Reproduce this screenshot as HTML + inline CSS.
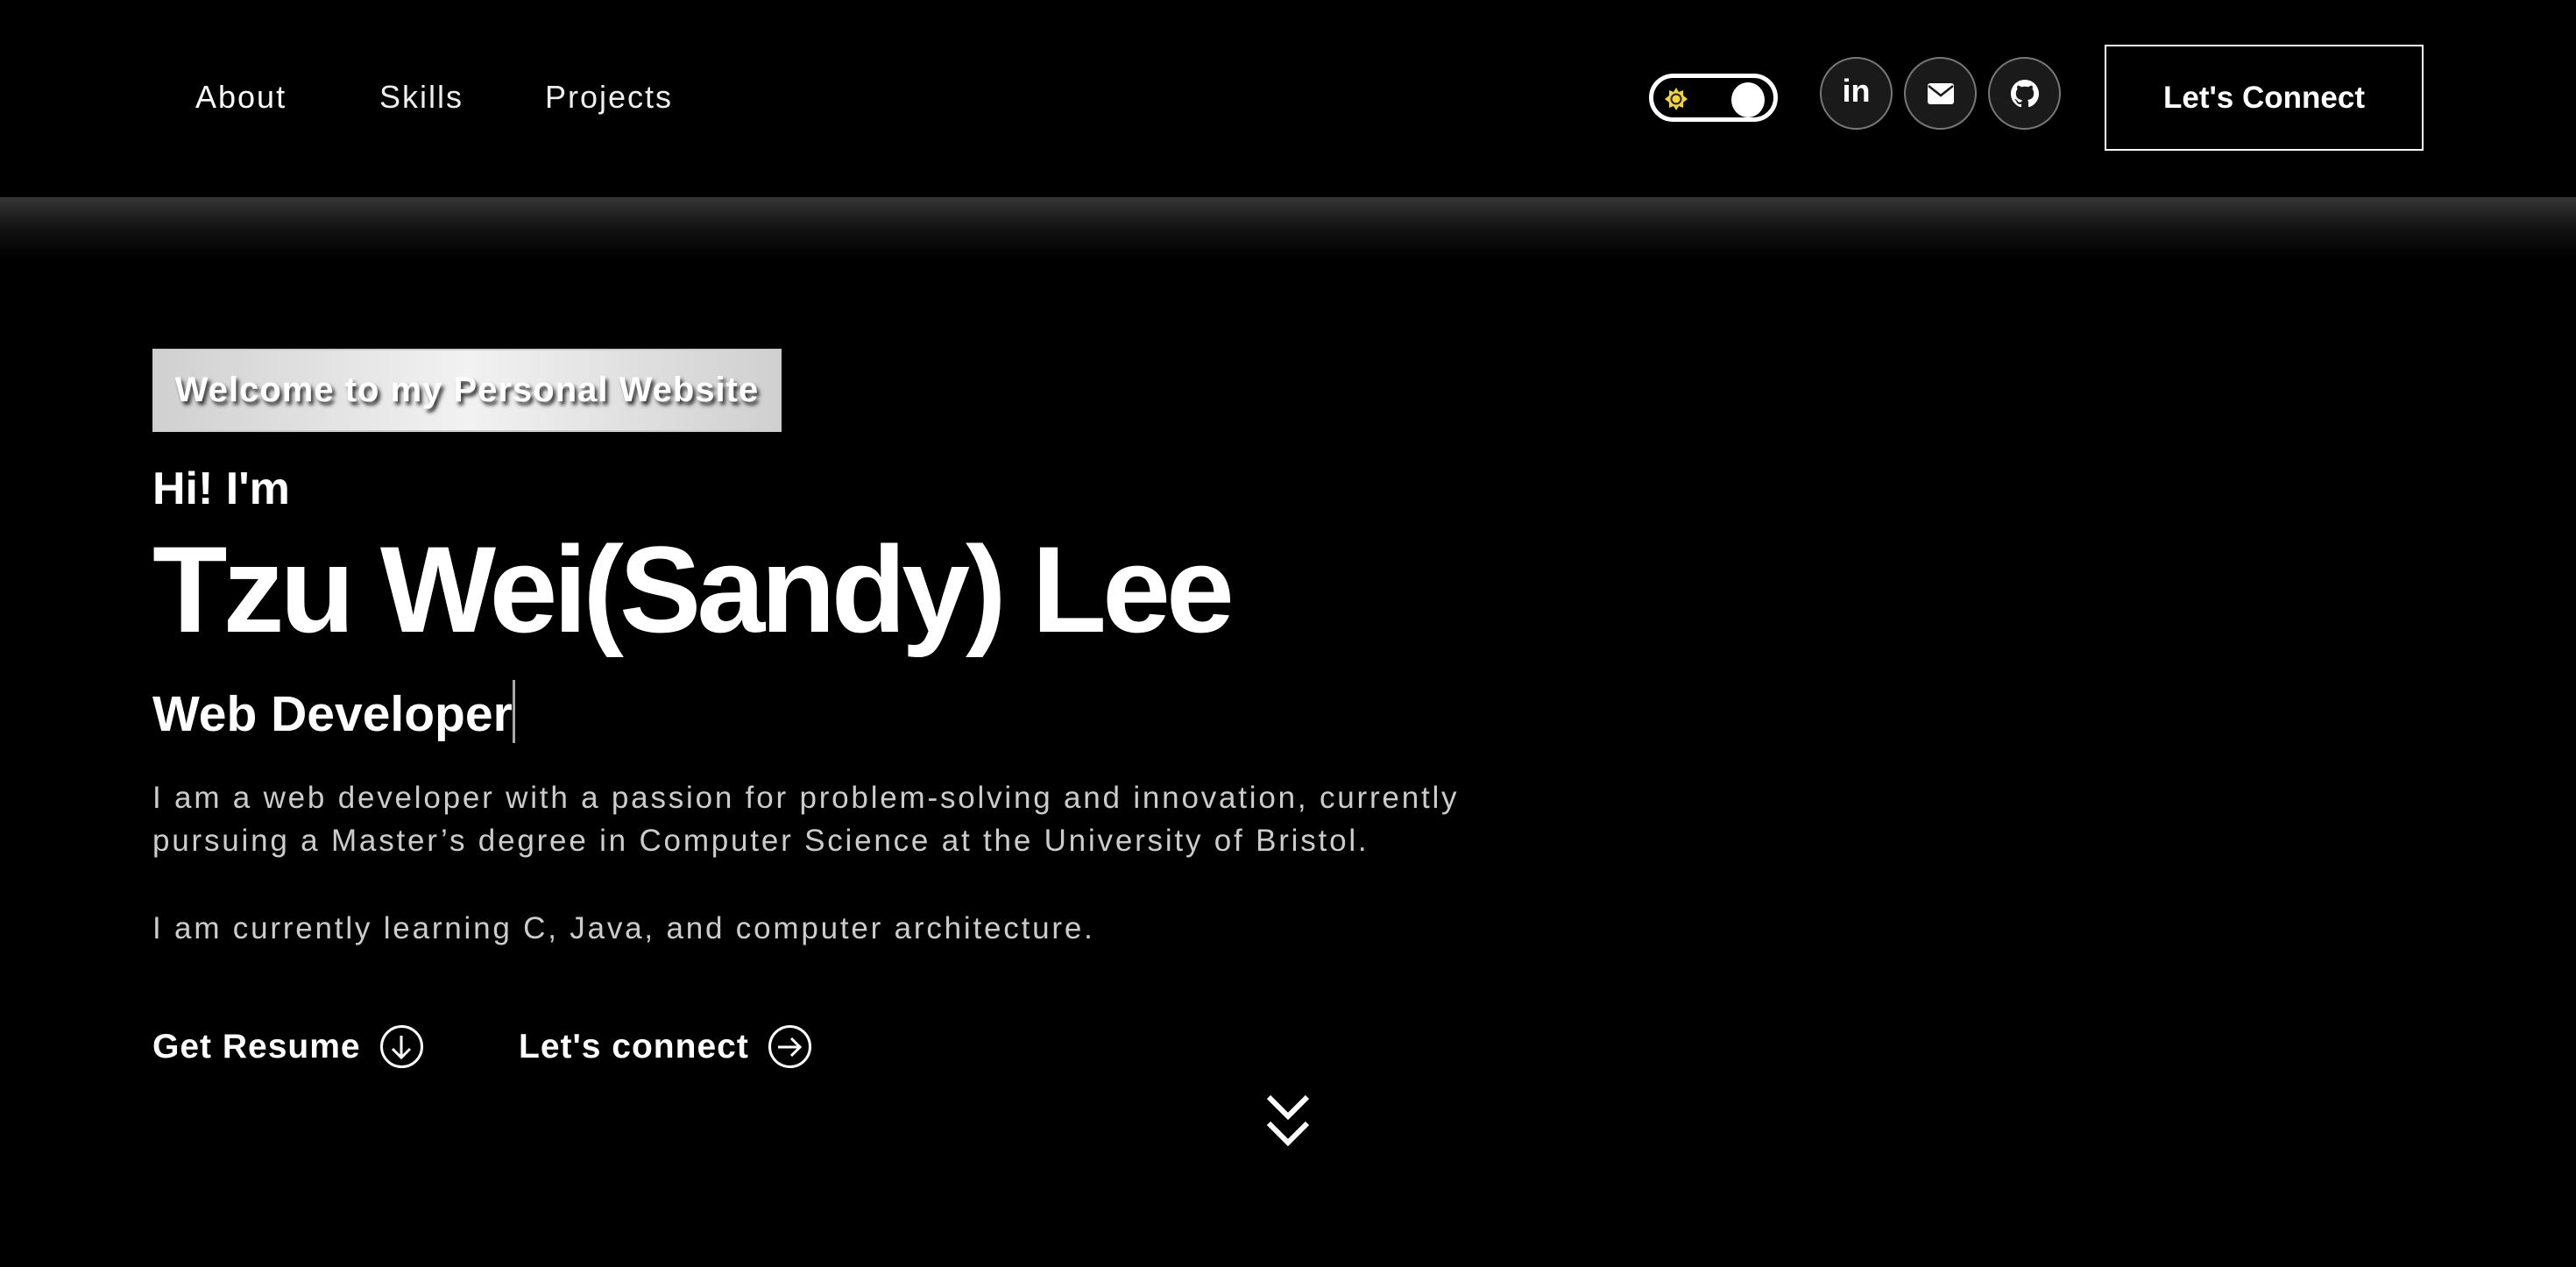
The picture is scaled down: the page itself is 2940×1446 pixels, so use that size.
<!DOCTYPE html>
<html><head><meta charset="utf-8"><style>
*{margin:0;padding:0;box-sizing:border-box}
html,body{width:2940px;height:1446px;background:#000;overflow:hidden;font-family:"Liberation Sans",sans-serif;color:#fff}
.hdr{position:absolute;left:0;top:0;width:2940px;height:225px;background:#000}
.shadow{position:absolute;left:0;top:225px;width:2940px;height:70px;background:linear-gradient(#353535,#131313 50%,#000)}
.nav{position:absolute;top:90px;font-size:36px;letter-spacing:2px;color:#eee}
.tog{position:absolute;left:1882px;top:84px;width:147px;height:55px;border:5px solid #fff;border-radius:28px}
.knob{position:absolute;right:10px;top:5px;width:38px;height:40px;border-radius:50%;background:#fff}
.ic{position:absolute;top:65px;width:83px;height:83px;border-radius:50%;background:#1a1a1a;border:2px solid #777;display:flex;align-items:center;justify-content:center}
.btn{position:absolute;left:2402px;top:51px;width:364px;height:121px;border:2px solid #fff;display:flex;align-items:center;justify-content:center;font-weight:bold;font-size:35px}
.badge{position:absolute;left:174px;top:398px;width:718px;height:95px;border:2px solid #ccc;background:linear-gradient(90deg,#d0d0d0,#f2f2f2 50%,#d0d0d0);display:flex;align-items:center;justify-content:center;font-weight:bold;font-size:40px;letter-spacing:1px;color:#fff;text-shadow:3px 4px 4px #333}
.t{position:absolute;left:174px;white-space:nowrap}
p.t{font-size:35px;color:#ccc;letter-spacing:2.8px;line-height:49px}
.cta{position:absolute;top:1170px;font-size:39px;font-weight:bold;letter-spacing:1px;display:flex;align-items:center;gap:22px}
.cc{width:49px;height:49px;border:3px solid #fff;border-radius:50%;display:flex;align-items:center;justify-content:center}
</style></head><body>
<div class="hdr">
<div class="nav" style="left:223px;color:#fff">About</div>
<div class="nav" style="left:433px">Skills</div>
<div class="nav" style="left:622px">Projects</div>
<div class="tog"><svg style="position:absolute;left:12px;top:10px" width="28" height="28" viewBox="0 0 28 28"><polygon points="14,1 17,6 22,4 22,10 27,14 22,18 22,24 17,22 14,27 11,22 6,24 6,18 1,14 6,10 6,4 11,6" fill="#f5d33b"/><circle cx="14" cy="14" r="5.5" fill="none" stroke="#222" stroke-width="2"/></svg><div class="knob"></div></div>
<div class="ic" style="left:2077px"><span style="font-weight:bold;font-size:36px;margin-top:-6px">in</span></div>
<div class="ic" style="left:2173px"><svg width="30" height="24" viewBox="0 0 30 24"><rect x="0" y="0" width="30" height="24" rx="3" fill="#fff"/><path d="M1 3 L15 14 L29 3" fill="none" stroke="#1a1a1a" stroke-width="2.5"/></svg></div>
<div class="ic" style="left:2269px"><svg width="32" height="32" viewBox="0 0 16 16"><path fill="#fff" d="M8 0C3.58 0 0 3.58 0 8c0 3.54 2.29 6.53 5.47 7.59.4.07.55-.17.55-.38v-1.33c-2.23.48-2.7-1.07-2.7-1.07-.36-.92-.89-1.17-.89-1.17-.73-.5.06-.49.06-.49.8.06 1.23.83 1.23.83.71 1.22 1.87.87 2.33.66.07-.52.28-.87.5-1.07-1.78-.2-3.64-.89-3.64-3.95 0-.87.31-1.59.82-2.15-.08-.2-.36-1.02.08-2.12 0 0 .67-.21 2.2.82A7.6 7.6 0 0 1 8 3.86c.68 0 1.36.09 2 .27 1.53-1.04 2.2-.82 2.2-.82.44 1.1.16 1.92.08 2.12.51.56.82 1.27.82 2.15 0 3.07-1.87 3.75-3.65 3.95.29.25.54.73.54 1.48v2.2c0 .21.15.46.55.38A8 8 0 0 0 16 8c0-4.42-3.58-8-8-8z"/></svg></div>
<div class="btn">Let's Connect</div>
</div>
<div class="shadow"></div>
<div class="badge">Welcome to my Personal Website</div>
<div class="t" style="top:528px;font-size:52px;font-weight:bold">Hi! I'm</div>
<div class="t" style="top:592px;font-size:140px;font-weight:bold;letter-spacing:-5px">Tzu Wei(Sandy) Lee</div>
<div class="t" style="top:776px;font-size:57px;font-weight:bold">Web Developer<span style="display:inline-block;width:3px;height:72px;background:#aaa;vertical-align:-14px;margin-left:0"></span></div>
<p class="t" style="top:886px">I am a web developer with a passion for problem-solving and innovation, currently<br>pursuing a Master’s degree in Computer Science at the University of Bristol.</p>
<p class="t" style="top:1035px">I am currently learning C, Java, and computer architecture.</p>
<div class="cta" style="left:174px">Get Resume <div class="cc"><svg width="26" height="30" viewBox="0 0 26 30"><path d="M13 2V27M3 17L13 27L23 17" fill="none" stroke="#fff" stroke-width="3"/></svg></div></div>
<div class="cta" style="left:592px">Let's connect <div class="cc"><svg width="30" height="26" viewBox="0 0 30 26"><path d="M2 13H27M17 3L27 13L17 23" fill="none" stroke="#fff" stroke-width="3"/></svg></div></div>
<svg style="position:absolute;left:1444px;top:1248px" width="52" height="66" viewBox="0 0 52 66"><path d="M4 4L26 26L48 4M4 34L26 56L48 34" fill="none" stroke="#fff" stroke-width="6"/></svg>
</body></html>
